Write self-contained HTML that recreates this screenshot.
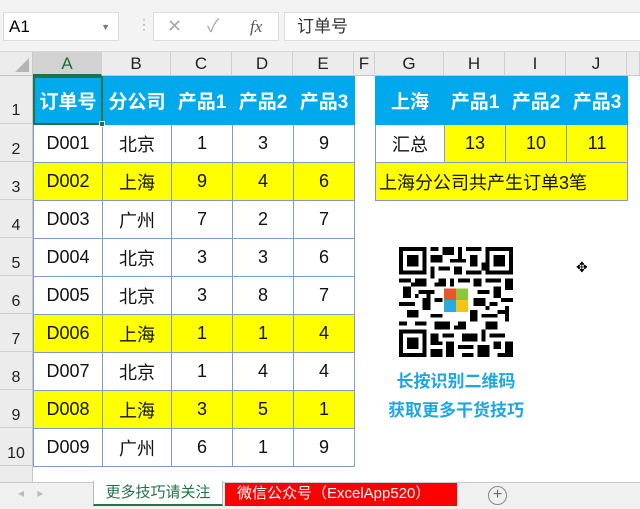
<!DOCTYPE html>
<html><head><meta charset="utf-8"><style>
*{margin:0;padding:0;box-sizing:border-box}
body{width:640px;height:509px;overflow:hidden;background:#fff;font-family:"Liberation Sans","Noto Sans CJK SC",sans-serif;position:relative}
.a{position:absolute}
.top{left:0;top:0;width:640px;height:52px;background:#f3f3f3;border-bottom:1px solid #d6d6d6}
.box{background:#fff;border:1px solid #dcdcdc}
.ch{top:52px;height:24px;background:#ececec;border-right:1px solid #d0d0d0;border-bottom:1px solid #c8c8c8;text-align:center;font-size:17px;line-height:24px;color:#222}
.rh{left:0;width:33px;background:#ececec;border-bottom:1px solid #d0d0d0;border-right:1px solid #c8c8c8;font-size:16px;color:#222;text-align:center}
table{border-collapse:collapse;position:absolute;table-layout:fixed}
td{border:1px solid #7f9bc9;text-align:center;font-size:18px;color:#111;padding:0;height:38px}
.b td.h{background:#00a9ec;color:#fff;font-weight:bold;height:48px;border-color:#00a9ec;font-size:19px}
.y{background:#ffff00}
</style></head><body>
<div class="a top"></div>
<div class="a box" style="left:3px;top:12px;width:116px;height:29px;font-size:17px;line-height:28px;padding-left:5px">A1<span style="position:absolute;right:8px;top:0;font-size:9px;color:#777">▼</span></div>
<div class="a" style="left:137px;top:16px;color:#aaa;font-size:14px">⋮</div>
<div class="a box" style="left:153px;top:12px;width:126px;height:29px;color:#aaa;font-size:18px;line-height:27px"><span style="position:absolute;left:13px">✕</span><span style="position:absolute;left:53px">✓</span><span style="position:absolute;left:96px;font-family:'Liberation Serif',serif;font-style:italic;color:#555;font-size:17px">fx</span></div>
<div class="a box" style="left:284px;top:12px;width:360px;height:29px;font-size:17px;line-height:28px;padding-left:12px;color:#333">订单号</div>

<div class="a" style="left:0;top:52px;width:33px;height:24px;background:#ececec;border-right:1px solid #c8c8c8;border-bottom:1px solid #c8c8c8"><div style="position:absolute;right:3px;bottom:3px;width:0;height:0;border-left:14px solid transparent;border-bottom:14px solid #b5b5b5"></div></div>
<div class="a ch" style="left:33px;width:69px;background:#d2d2d2;color:#1e6e3e;border-bottom:2px solid #217346">A</div>
<div class="a ch" style="left:102px;width:69px">B</div>
<div class="a ch" style="left:171px;width:61px">C</div>
<div class="a ch" style="left:232px;width:61px">D</div>
<div class="a ch" style="left:293px;width:61px">E</div>
<div class="a ch" style="left:354px;width:21px">F</div>
<div class="a ch" style="left:375px;width:69px">G</div>
<div class="a ch" style="left:444px;width:61px">H</div>
<div class="a ch" style="left:505px;width:61px">I</div>
<div class="a ch" style="left:566px;width:61px">J</div>
<div class="a ch" style="left:627px;width:13px"></div>

<div class="a rh" style="top:76px;height:48px;line-height:70px">1</div>
<div class="a rh" style="top:124px;height:38px;line-height:52px">2</div>
<div class="a rh" style="top:162px;height:38px;line-height:52px">3</div>
<div class="a rh" style="top:200px;height:38px;line-height:52px">4</div>
<div class="a rh" style="top:238px;height:38px;line-height:52px">5</div>
<div class="a rh" style="top:276px;height:38px;line-height:52px">6</div>
<div class="a rh" style="top:314px;height:38px;line-height:52px">7</div>
<div class="a rh" style="top:352px;height:38px;line-height:52px">8</div>
<div class="a rh" style="top:390px;height:38px;line-height:52px">9</div>
<div class="a rh" style="top:428px;height:38px;line-height:52px">10</div>
<div class="a rh" style="top:466px;height:16px;border-bottom:none"></div>

<table class="b" style="left:33px;top:76px;width:321px">
<colgroup><col style="width:69px"><col style="width:69px"><col style="width:61px"><col style="width:61px"><col style="width:61px"></colgroup>
<tr><td class="h">订单号</td><td class="h">分公司</td><td class="h">产品1</td><td class="h">产品2</td><td class="h">产品3</td></tr>
<tr><td>D001</td><td>北京</td><td>1</td><td>3</td><td>9</td></tr>
<tr class="y"><td>D002</td><td>上海</td><td>9</td><td>4</td><td>6</td></tr>
<tr><td>D003</td><td>广州</td><td>7</td><td>2</td><td>7</td></tr>
<tr><td>D004</td><td>北京</td><td>3</td><td>3</td><td>6</td></tr>
<tr><td>D005</td><td>北京</td><td>3</td><td>8</td><td>7</td></tr>
<tr class="y"><td>D006</td><td>上海</td><td>1</td><td>1</td><td>4</td></tr>
<tr><td>D007</td><td>北京</td><td>1</td><td>4</td><td>4</td></tr>
<tr class="y"><td>D008</td><td>上海</td><td>3</td><td>5</td><td>1</td></tr>
<tr><td>D009</td><td>广州</td><td>6</td><td>1</td><td>9</td></tr>
</table>
<div class="a" style="left:33px;top:76px;width:70px;height:49px;border:2px solid #217346"></div>
<div class="a" style="left:99px;top:121px;width:6px;height:6px;background:#217346;border:1px solid #fff"></div>

<table class="b" style="left:375px;top:76px;width:252px">
<colgroup><col style="width:69px"><col style="width:61px"><col style="width:61px"><col style="width:61px"></colgroup>
<tr><td class="h">上海</td><td class="h">产品1</td><td class="h">产品2</td><td class="h">产品3</td></tr>
<tr><td>汇总</td><td class="y">13</td><td class="y">10</td><td class="y">11</td></tr>
<tr class="y"><td colspan="4" style="text-align:left;padding-left:3px">上海分公司共产生订单3笔</td></tr>
</table>

<svg class="a" style="left:399px;top:247px" width="114" height="110" viewBox="0 0 29 28" shape-rendering="crispEdges">
<g fill="#000">
<path d="M0 0h7v7h-7zM1 1v5h5v-5zM2 2h3v3h-3z" fill-rule="evenodd"/>
<path d="M22 0h7v7h-7zM23 1v5h5v-5zM24 2h3v3h-3z" fill-rule="evenodd"/>
<path d="M0 21h7v7h-7zM1 22v5h5v-5zM2 23h3v3h-3z" fill-rule="evenodd"/>
<path d="M8 0h2v1h-2zM11 0h3v2h-3zM15 0h1v3h-1zM17 0h4v1h-4zM9 2h2v2h-2zM13 3h4v1h-4zM18 2h2v3h-2zM8 5h1v3h-1zM10 5h3v1h-3zM14 5h2v2h-2zM17 6h4v1h-4zM0 8h3v1h-3zM4 8h3v2h-3zM10 8h2v2h-2zM13 8h1v3h-1zM15 8h3v1h-3zM19 8h2v2h-2zM22 8h4v1h-4zM27 8h2v3h-2zM1 10h2v3h-2zM5 11h4v1h-4zM16 10h2v2h-2zM20 11h3v1h-3zM24 10h2v3h-2zM0 14h4v1h-4zM6 13h2v3h-2zM9 13h2v1h-2zM19 13h3v2h-3zM23 14h2v1h-2zM26 13h3v1h-3zM2 16h3v2h-3zM8 17h3v1h-3zM18 16h2v3h-2zM21 17h4v1h-4zM27 15h1v4h-1zM0 19h2v1h-2zM4 19h3v1h-3zM9 19h4v2h-4zM15 19h2v2h-2zM22 19h3v2h-3zM8 22h2v3h-2zM11 22h3v1h-3zM16 22h3v2h-3zM21 21h1v3h-1zM23 22h4v1h-4zM12 24h2v4h-2zM15 25h4v1h-4zM20 25h3v3h-3zM24 24h2v2h-2zM27 24h2v4h-2zM8 26h3v2h-3zM16 27h3v1h-3zM3 9h1v1h-1zM11 15h2v2h-2zM17 14h1v1h-1zM25 16h2v1h-2zM9 9h1v1h-1zM7 12h1v1h-1zM21 4h1v2h-1zM8 2h1v2h-1zM4 12h1v1h-1zM22 15h1v1h-1zM10 24h1v1h-1zM14 20h1v1h-1zM25 27h2v1h-2zM19 22h1v2h-1z"/>
</g>
<rect x="11" y="10" width="7" height="7" fill="#fff"/>
<rect x="11.5" y="10.5" width="3" height="3" fill="#e8542e"/>
<rect x="14.5" y="10.5" width="3" height="3" fill="#8cc63f"/>
<rect x="11.5" y="13.5" width="3" height="3" fill="#29abe2"/>
<rect x="14.5" y="13.5" width="3" height="3" fill="#f7c21a"/>
</svg>
<div class="a" style="left:375px;top:367px;width:162px;text-align:center;color:#1ea6e0;font-weight:bold;font-size:17px">长按识别二维码</div>
<div class="a" style="left:375px;top:396px;width:162px;text-align:center;color:#1ea6e0;font-weight:bold;font-size:17px">获取更多干货技巧</div>
<div class="a" style="left:576px;top:259px;font-size:14px;color:#000">✥</div>

<div class="a" style="left:0;top:482px;width:640px;height:27px;background:#f0f0f0;border-top:1px solid #c8c8c8"></div>
<div class="a" style="left:18px;top:486px;color:#bbb;font-size:12px">◂&nbsp;&nbsp;&nbsp;&nbsp;▸</div>
<div class="a" style="left:93px;top:481px;width:130px;height:25px;background:#fff;border-bottom:2px solid #217346;border-left:1px solid #bbb;border-right:1px solid #bbb;color:#217346;font-size:15px;line-height:24px;text-align:center">更多技巧请关注</div>
<div class="a" style="left:225px;top:483px;height:23px;background:#ff0000;color:#fff;font-size:15px;line-height:22px;padding-left:12px;white-space:nowrap;width:232px">微信公众号（ExcelApp520）</div>
<div class="a" style="left:488px;top:486px;width:19px;height:19px;border:1px solid #888;border-radius:50%;color:#666;font-size:16px;line-height:16px;text-align:center">+</div>
</body></html>
